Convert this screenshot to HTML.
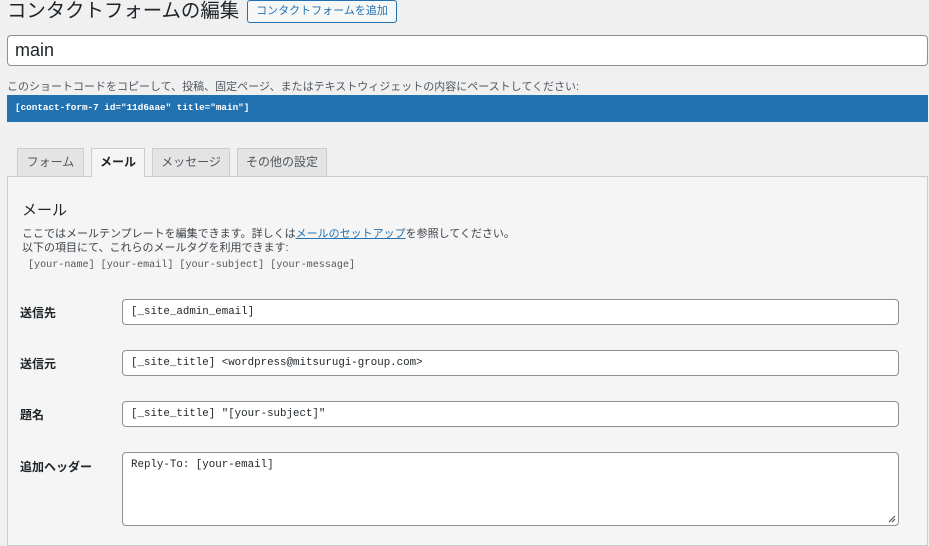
<!DOCTYPE html>
<html><head><meta charset="utf-8"><style>
*{box-sizing:border-box;margin:0;padding:0}
body{width:929px;height:533px;overflow:hidden;background:#f0f0f1;font-family:"Liberation Sans","Noto Sans CJK JP",sans-serif;color:#1d2327;position:relative}
.a{position:absolute;white-space:nowrap}
.mono{font-family:"Liberation Mono","Noto Sans CJK JP",monospace}
.inp{position:absolute;left:122px;width:777px;height:26px;background:#fff;border:1px solid #8c8f94;border-radius:4px;font-size:10.8px;padding:5px 8px;line-height:14px}
.lbl{position:absolute;left:20px;font-size:12px;font-weight:bold}
.tab{position:absolute;top:148px;height:28px;background:#e4e4e4;border:1px solid #ccc;border-bottom:none;font-size:12px;text-align:center;line-height:27px;color:#50575e}
</style></head><body>
<div class="a" style="left:7px;top:-3px;font-size:19.4px;line-height:28px">コンタクトフォームの編集</div>
<div class="a" style="left:247px;top:0;width:150px;height:23px;border:1px solid #2271b1;border-radius:3px;background:#f6f7f7;color:#2271b1;font-size:11px;text-align:center;line-height:21px">コンタクトフォームを追加</div>
<div class="a" style="left:7px;top:35px;width:921px;height:31px;background:#fff;border:1px solid #8c8f94;border-radius:4px;font-size:18px;padding:0 7px;line-height:29px">main</div>
<div class="a" style="left:7px;top:78px;font-size:11px;color:#50575e">このショートコードをコピーして、投稿、固定ページ、またはテキストウィジェットの内容にペーストしてください:</div>
<div class="a mono" style="left:7px;top:95px;width:921px;height:27px;background:#2271b1;color:#fff;font-size:9.3px;font-weight:bold;padding:0 8px;line-height:26px">[contact-form-7 id="11d6aae" title="main"]</div>
<div class="a" style="left:7px;top:176px;width:921px;height:370px;background:#f5f5f5;border:1px solid #ccc"></div>
<div class="tab" style="left:17px;width:67px">フォーム</div>
<div class="tab" style="left:91px;width:54px;height:29px;background:#f5f5f5;color:#1d2327;font-weight:bold;z-index:2">メール</div>
<div class="tab" style="left:152px;width:78px">メッセージ</div>
<div class="tab" style="left:237px;width:90px">その他の設定</div>
<div class="a" style="left:22px;top:199px;font-size:15px">メール</div>
<div class="a" style="left:22px;top:227px;font-size:11px;color:#3c434a;line-height:14px">ここではメールテンプレートを編集できます。詳しくは<span style="color:#2271b1;text-decoration:underline">メールのセットアップ</span>を参照してください。<br>以下の項目にて、これらのメールタグを利用できます:</div>
<div class="a mono" style="left:28px;top:260px;font-size:10.1px;color:#50575e">[your-name] [your-email] [your-subject] [your-message]</div>
<div class="lbl" style="top:304px">送信先</div>
<div class="inp mono" style="top:299px">[_site_admin_email]</div>
<div class="lbl" style="top:355px">送信元</div>
<div class="inp mono" style="top:350px">[_site_title] &lt;wordpress@mitsurugi-group.com&gt;</div>
<div class="lbl" style="top:406px">題名</div>
<div class="inp mono" style="top:401px">[_site_title] "[your-subject]"</div>
<div class="lbl" style="top:458px">追加ヘッダー</div>
<div class="inp mono" style="top:452px;height:74px">Reply-To: [your-email]
<svg style="position:absolute;right:2px;bottom:2px" width="8" height="8"><path d="M1 7L7 1M4 7L7 4" stroke="#555" stroke-width="1.2"/></svg></div>
</body></html>
